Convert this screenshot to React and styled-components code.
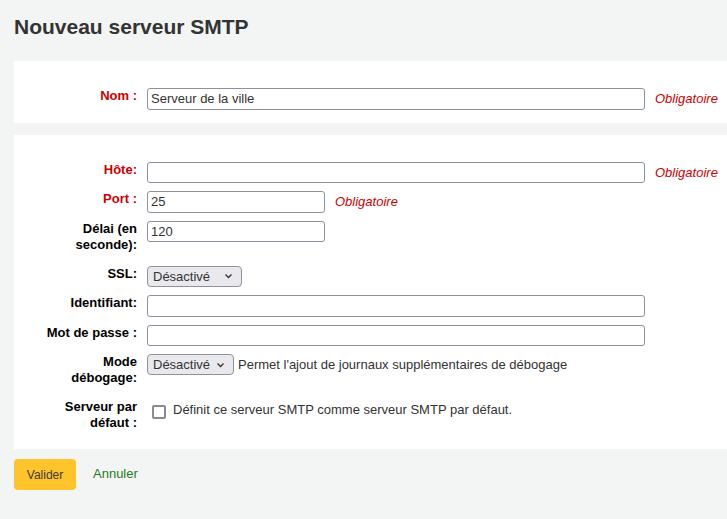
import React from 'react'
import styled, {createGlobalStyle} from 'styled-components'

const GlobalStyle = createGlobalStyle`
  html, body {
    margin: 0;
    padding: 0;
    background: #f3f4f4;
  }
  body {
    font-family: "Liberation Sans", Arial, sans-serif;
    font-size: 13px;
    color: #333;
  }
`

const Page = styled.div`
  padding: 13px 0 0 14px;
  min-height: 519px;
  box-sizing: border-box;
`

const Title = styled.h1`
  margin: 0 0 20px;
  font-size: 21px;
  line-height: 28px;
  font-weight: bold;
  color: #333;
`

const Fieldset = styled.fieldset`
  margin: 0 0 12px;
  border: 0;
  background: #fff;
  padding: 27px 0 5px 25px;

  &:last-of-type {
    margin-bottom: 10px;
  }
`

const List = styled.ol`
  margin: 0;
  padding: 0;
  list-style: none;
`

const Row = styled.li`
  display: flex;
  align-items: flex-start;
  padding-bottom: 8px;
`

const Label = styled.label`
  width: 98px;
  flex: none;
  margin-right: 10px;
  padding-bottom: ${p => (p.$tall ? '5px' : '0')};
  text-align: right;
  font-weight: bold;
  line-height: 16px;
  color: ${p => (p.$required ? '#cc0000' : '#000')};
`

const Field = styled.div`
  display: flex;
  align-items: center;
  min-height: 21.5px;
`

const TextInput = styled.input`
  box-sizing: border-box;
  width: ${p => p.$w}px;
  height: 21.5px;
  margin: 0;
  padding: 1px 3px;
  font-family: "Liberation Sans", Arial, sans-serif;
  font-size: 13px;
  color: #333;
  border: 1px solid #8f8f9d;
  border-radius: 3px;
  background: #fff;
  outline: none;
`

const Required = styled.span`
  margin-left: 10px;
  font-style: italic;
  color: #cc0000;
`

const Select = styled.div`
  box-sizing: border-box;
  display: inline-flex;
  align-items: center;
  justify-content: space-between;
  width: ${p => p.$w}px;
  height: 21px;
  padding: 0 8px 0 5px;
  border: 1px solid #8f8f9d;
  border-radius: 4px;
  background: #e9e9ed;
  color: #333;
  font-size: 13px;
`

const Hint = styled.span`
  margin-left: ${p => (p.$flush ? '0' : '4px')};
  color: #333;
`

const Check = styled.span`
  box-sizing: border-box;
  display: inline-block;
  width: 14px;
  height: 14px;
  margin: 4px 7px 0 5px;
  border: 2px solid #8a8a96;
  border-radius: 2px;
  background: #fff;
`

const Actions = styled.div`
  display: flex;
  align-items: center;
  gap: 17px;
`

const Button = styled.button`
  width: 62px;
  height: 31px;
  border: 0;
  border-radius: 4px;
  background: #ffc32b;
  color: #3b3b3b;
  font-family: "Liberation Sans", Arial, sans-serif;
  font-size: 12px;
  padding: 0;
`

const Link = styled.a`
  color: #1f7a1f;
  font-size: 13px;
  text-decoration: none;
  margin-top: -2px;
`

const Chevron = () => (
  <svg width="9" height="6" viewBox="0 0 9 6">
    <path d="M1.5 1.5 L4.5 4.5 L7.5 1.5" fill="none" stroke="#333" strokeWidth="1.3" />
  </svg>
)

export default function App() {
  return (
    <Page>
      <GlobalStyle />
      <Title>Nouveau serveur SMTP</Title>

      <Fieldset>
        <List>
          <Row>
            <Label $required>Nom :</Label>
            <Field>
              <TextInput $w={498} defaultValue="Serveur de la ville" />
              <Required>Obligatoire</Required>
            </Field>
          </Row>
        </List>
      </Fieldset>

      <Fieldset>
        <List>
          <Row>
            <Label $required>Hôte:</Label>
            <Field>
              <TextInput $w={498} />
              <Required>Obligatoire</Required>
            </Field>
          </Row>
          <Row>
            <Label $required>Port :</Label>
            <Field>
              <TextInput $w={178} defaultValue="25" />
              <Required>Obligatoire</Required>
            </Field>
          </Row>
          <Row>
            <Label $tall>Délai (en seconde):</Label>
            <Field>
              <TextInput $w={178} defaultValue="120" />
            </Field>
          </Row>
          <Row>
            <Label>SSL:</Label>
            <Field>
              <Select $w={95}>
                <span>Désactivé</span>
                <Chevron />
              </Select>
            </Field>
          </Row>
          <Row>
            <Label>Identifiant:</Label>
            <Field>
              <TextInput $w={498} />
            </Field>
          </Row>
          <Row>
            <Label>Mot de passe :</Label>
            <Field>
              <TextInput $w={498} />
            </Field>
          </Row>
          <Row>
            <Label $tall>Mode débogage:</Label>
            <Field>
              <Select $w={87}>
                <span>Désactivé</span>
                <Chevron />
              </Select>
              <Hint>Permet l'ajout de journaux supplémentaires de débogage</Hint>
            </Field>
          </Row>
          <Row>
            <Label $tall>Serveur par défaut :</Label>
            <Field>
              <Check />
              <Hint $flush>Définit ce serveur SMTP comme serveur SMTP par défaut.</Hint>
            </Field>
          </Row>
        </List>
      </Fieldset>

      <Actions>
        <Button>Valider</Button>
        <Link href="#">Annuler</Link>
      </Actions>
    </Page>
  )
}
